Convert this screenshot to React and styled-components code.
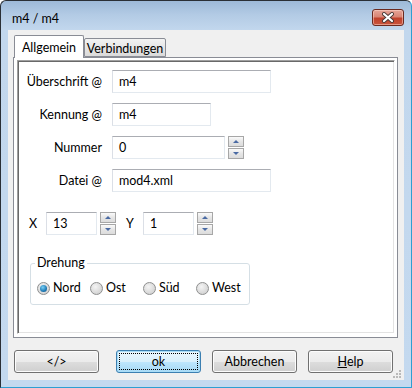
import React from "react";
import styled, { createGlobalStyle } from "styled-components";

const Global = createGlobalStyle`
  html, body {
    margin: 0;
    padding: 0;
    background: #ffffff;
  }
  body {
    font-family: Lato, "Noto Sans", sans-serif;
    font-size: 12.5px;
    color: #000;
  }
`;

const Window = styled.div`
  width: 412px;
  height: 388px;
  box-sizing: border-box;
  display: flex;
  flex-direction: column;
  border: 1px solid #2a2f36;
  border-right-color: #2e9fd2;
  border-bottom-color: #2e9fd2;
  border-radius: 6px 6px 0 0;
  background: linear-gradient(#9db9d8 0px, #b3cbe5 14px, #c2d7ed 29px, #c4d9ef 100%);
  overflow: hidden;
`;

const TitleBar = styled.div`
  height: 29px;
  flex: none;
  display: flex;
  justify-content: space-between;
  align-items: flex-start;
  padding: 0 7px 0 11px;
`;

const Title = styled.div`
  padding-top: 10px;
  line-height: 16px;
`;

const CloseButton = styled.div`
  margin-top: 8px;
  width: 32px;
  height: 17px;
  box-sizing: border-box;
  border: 1px solid #6b2a20;
  border-radius: 3px;
  background: linear-gradient(#e6a598 0%, #d98575 45%, #c0412c 55%, #c9553d 100%);
  box-shadow: inset 0 0 0 1px rgba(255, 220, 210, 0.5);
  display: flex;
  align-items: center;
  justify-content: center;
`;

const Client = styled.div`
  position: relative;
  flex: 1;
  margin: 0 7px 7px 7px;
  background: #f0f0f0;
  display: flex;
  flex-direction: column;
  padding: 5px 6px 0 5px;
`;

const TabStrip = styled.div`
  display: flex;
  align-items: flex-end;
  height: 22px;
  padding-left: 1px;
  position: relative;
  z-index: 1;
`;

const Tab = styled.div`
  box-sizing: border-box;
  border: 1px solid #898c95;
  border-radius: 2px 2px 0 0;
  line-height: 19px;
  height: ${(p) => (p.$active ? "23px" : "19px")};
  margin-bottom: ${(p) => (p.$active ? "-1px" : "0")};
  background: ${(p) =>
    p.$active ? "#ffffff" : "linear-gradient(#f3f3f3, #e6e6e6 50%, #dadada)"};
  border-bottom: ${(p) => (p.$active ? "none" : "1px solid #898c95")};
  padding-top: ${(p) => (p.$active ? "2px" : "0")};
  width: ${(p) => p.$w}px;
  text-align: center;
`;

const Pane = styled.div`
  height: 281px;
  box-sizing: border-box;
  border: 1px solid #898c95;
  background: #fff;
  padding: 2px 2px 3px 3px;
  display: flex;
`;

const Inner = styled.div`
  flex: 1;
  box-sizing: border-box;
  border: 1px solid;
  border-color: #a0a0a0 #ffffff #ffffff #a0a0a0;
  box-shadow: inset 1px 1px #696969, inset -1px -1px #e3e3e3;
  padding: 9px 0 0 2px;
`;

const FormGrid = styled.div`
  display: grid;
  grid-template-columns: 82px auto;
  column-gap: 10px;
  row-gap: 10px;
  align-items: center;
`;

const Label = styled.div`
  text-align: right;
  line-height: 23px;
  white-space: nowrap;
`;

const Field = styled.div`
  display: flex;
  align-items: center;
  gap: 3px;
`;

const TextBox = styled.div`
  box-sizing: border-box;
  width: ${(p) => p.$w}px;
  height: 23px;
  border: 1px solid #e3e9ef;
  border-top-color: #abadb3;
  border-left-color: #dbdfe6;
  background: #fff;
  padding-left: 6px;
  line-height: 21px;
`;

const Spinner = styled.div`
  display: flex;
  flex-direction: column;
  gap: 1px;
`;

const SpinBtn = styled.div`
  box-sizing: border-box;
  width: 16px;
  height: 11px;
  border: 1px solid #a7a7a7;
  background: linear-gradient(#fafafa, #e6e6e6 50%, #dcdcdc);
  display: flex;
  align-items: center;
  justify-content: center;
`;

const Arrow = styled.div`
  width: 0;
  height: 0;
  border-left: 3px solid transparent;
  border-right: 3px solid transparent;
  ${(p) =>
    p.$up ? "border-bottom: 3px solid #4a6aa3;" : "border-top: 3px solid #4a6aa3;"}
`;

const CoordRow = styled.div`
  display: flex;
  align-items: center;
  margin: 20px 0 0 9px;
`;

const CoordLabel = styled.div`
  width: 17px;
  margin-left: ${(p) => (p.$gap ? "10px" : "0")};
  line-height: 23px;
`;

const Group = styled.fieldset`
  margin: 20px 0 0 10px;
  width: 218px;
  height: 50px;
  box-sizing: border-box;
  border: 1px solid #d5dfe5;
  border-radius: 3px;
  padding: 9px 0 0 6px;
`;

const Legend = styled.legend`
  padding: 0 2px;
  margin-left: -2px;
  line-height: 16px;
`;

const RadioRow = styled.div`
  display: grid;
  grid-template-columns: repeat(4, 53px);
`;

const RadioItem = styled.label`
  display: flex;
  align-items: center;
  gap: 3px;
  line-height: 16px;
`;

const RadioCircle = styled.span`
  width: 13px;
  height: 13px;
  box-sizing: border-box;
  border-radius: 50%;
  border: 1px solid #8e8f8f;
  background: radial-gradient(circle at 40% 35%, #f4f4f4, #d6d6d6 70%, #cfcfcf);
  display: flex;
  align-items: center;
  justify-content: center;
  &::after {
    content: "";
    display: ${(p) => (p.$checked ? "block" : "none")};
    width: 7px;
    height: 7px;
    border-radius: 50%;
    background: radial-gradient(circle at 40% 35%, #7ad0f5, #1f7ab5 60%, #0d4f80);
  }
`;

const ButtonRow = styled.div`
  display: flex;
  gap: 11px;
  margin-top: 12px;
  padding-left: 1px;
`;

const Button = styled.div`
  box-sizing: border-box;
  width: 85px;
  height: 23px;
  border: 1px solid ${(p) => (p.$default ? "#3c7fb1" : "#707070")};
  border-radius: 3px;
  background: ${(p) =>
    p.$default
      ? "linear-gradient(#eaf6fd 0%, #d9f0fc 50%, #bee6fd 51%, #a7d9f5 100%)"
      : "linear-gradient(#f2f2f2 0%, #ebebeb 50%, #dddddd 51%, #cfcfcf 100%)"};
  box-shadow: inset 0 0 0 1px ${(p) => (p.$default ? "#a9ddf7" : "#fcfcfc")};
  display: flex;
  align-items: center;
  justify-content: center;
  position: relative;
  margin-right: ${(p) => (p.$spaced ? "6px" : "0")};
  &::after {
    content: "";
    display: ${(p) => (p.$default ? "block" : "none")};
    position: absolute;
    inset: 2px;
    border: 1px dotted #000;
  }
`;

const Grip = styled.svg`
  position: absolute;
  right: 2px;
  bottom: 1px;
`;

function Spin() {
  return (
    <Spinner>
      <SpinBtn>
        <Arrow $up />
      </SpinBtn>
      <SpinBtn>
        <Arrow />
      </SpinBtn>
    </Spinner>
  );
}

const fields = [
  { label: "Überschrift @", value: "m4", w: 159 },
  { label: "Kennung @", value: "m4", w: 99 },
  { label: "Nummer", value: "0", w: 113, spin: true },
  { label: "Datei @", value: "mod4.xml", w: 159 },
];

const radios = ["Nord", "Ost", "Süd", "West"];

export default function App() {
  return (
    <>
      <Global />
      <Window>
        <TitleBar>
          <Title>m4 / m4</Title>
          <CloseButton>
            <svg width="14" height="11" viewBox="0 0 14 11">
              <path
                d="M3 2 L11 9 M11 2 L3 9"
                stroke="#4a3a38"
                strokeWidth="4"
                strokeLinecap="round"
              />
              <path
                d="M3 2 L11 9 M11 2 L3 9"
                stroke="#ffffff"
                strokeWidth="2.2"
                strokeLinecap="round"
              />
            </svg>
          </CloseButton>
        </TitleBar>
        <Client>
          <TabStrip>
            <Tab $active $w={70}>
              Allgemein
            </Tab>
            <Tab $w={82}>Verbindungen</Tab>
          </TabStrip>
          <Pane>
            <Inner>
              <FormGrid>
                {fields.map((f) => (
                  <React.Fragment key={f.label}>
                    <Label>{f.label}</Label>
                    <Field>
                      <TextBox $w={f.w}>{f.value}</TextBox>
                      {f.spin && <Spin />}
                    </Field>
                  </React.Fragment>
                ))}
              </FormGrid>
              <CoordRow>
                <CoordLabel>X</CoordLabel>
                <Field>
                  <TextBox $w={51}>13</TextBox>
                  <Spin />
                </Field>
                <CoordLabel $gap>Y</CoordLabel>
                <Field>
                  <TextBox $w={51}>1</TextBox>
                  <Spin />
                </Field>
              </CoordRow>
              <Group>
                <Legend>Drehung</Legend>
                <RadioRow>
                  {radios.map((r, i) => (
                    <RadioItem key={r}>
                      <RadioCircle $checked={i === 0} />
                      {r}
                    </RadioItem>
                  ))}
                </RadioRow>
              </Group>
            </Inner>
          </Pane>
          <ButtonRow>
            <Button $spaced>&lt;/&gt;</Button>
            <Button $default>ok</Button>
            <Button>Abbrechen</Button>
            <Button>
              <span>
                <u>H</u>elp
              </span>
            </Button>
          </ButtonRow>
          <Grip width="10" height="10" viewBox="0 0 10 10">
            {[
              [8, 2],
              [8, 5],
              [5, 5],
              [8, 8],
              [5, 8],
              [2, 8],
            ].map(([x, y]) => (
              <rect key={`${x}-${y}`} x={x - 1} y={y - 1} width="2" height="2" fill="#b9b9b9" />
            ))}
          </Grip>
        </Client>
      </Window>
    </>
  );
}
